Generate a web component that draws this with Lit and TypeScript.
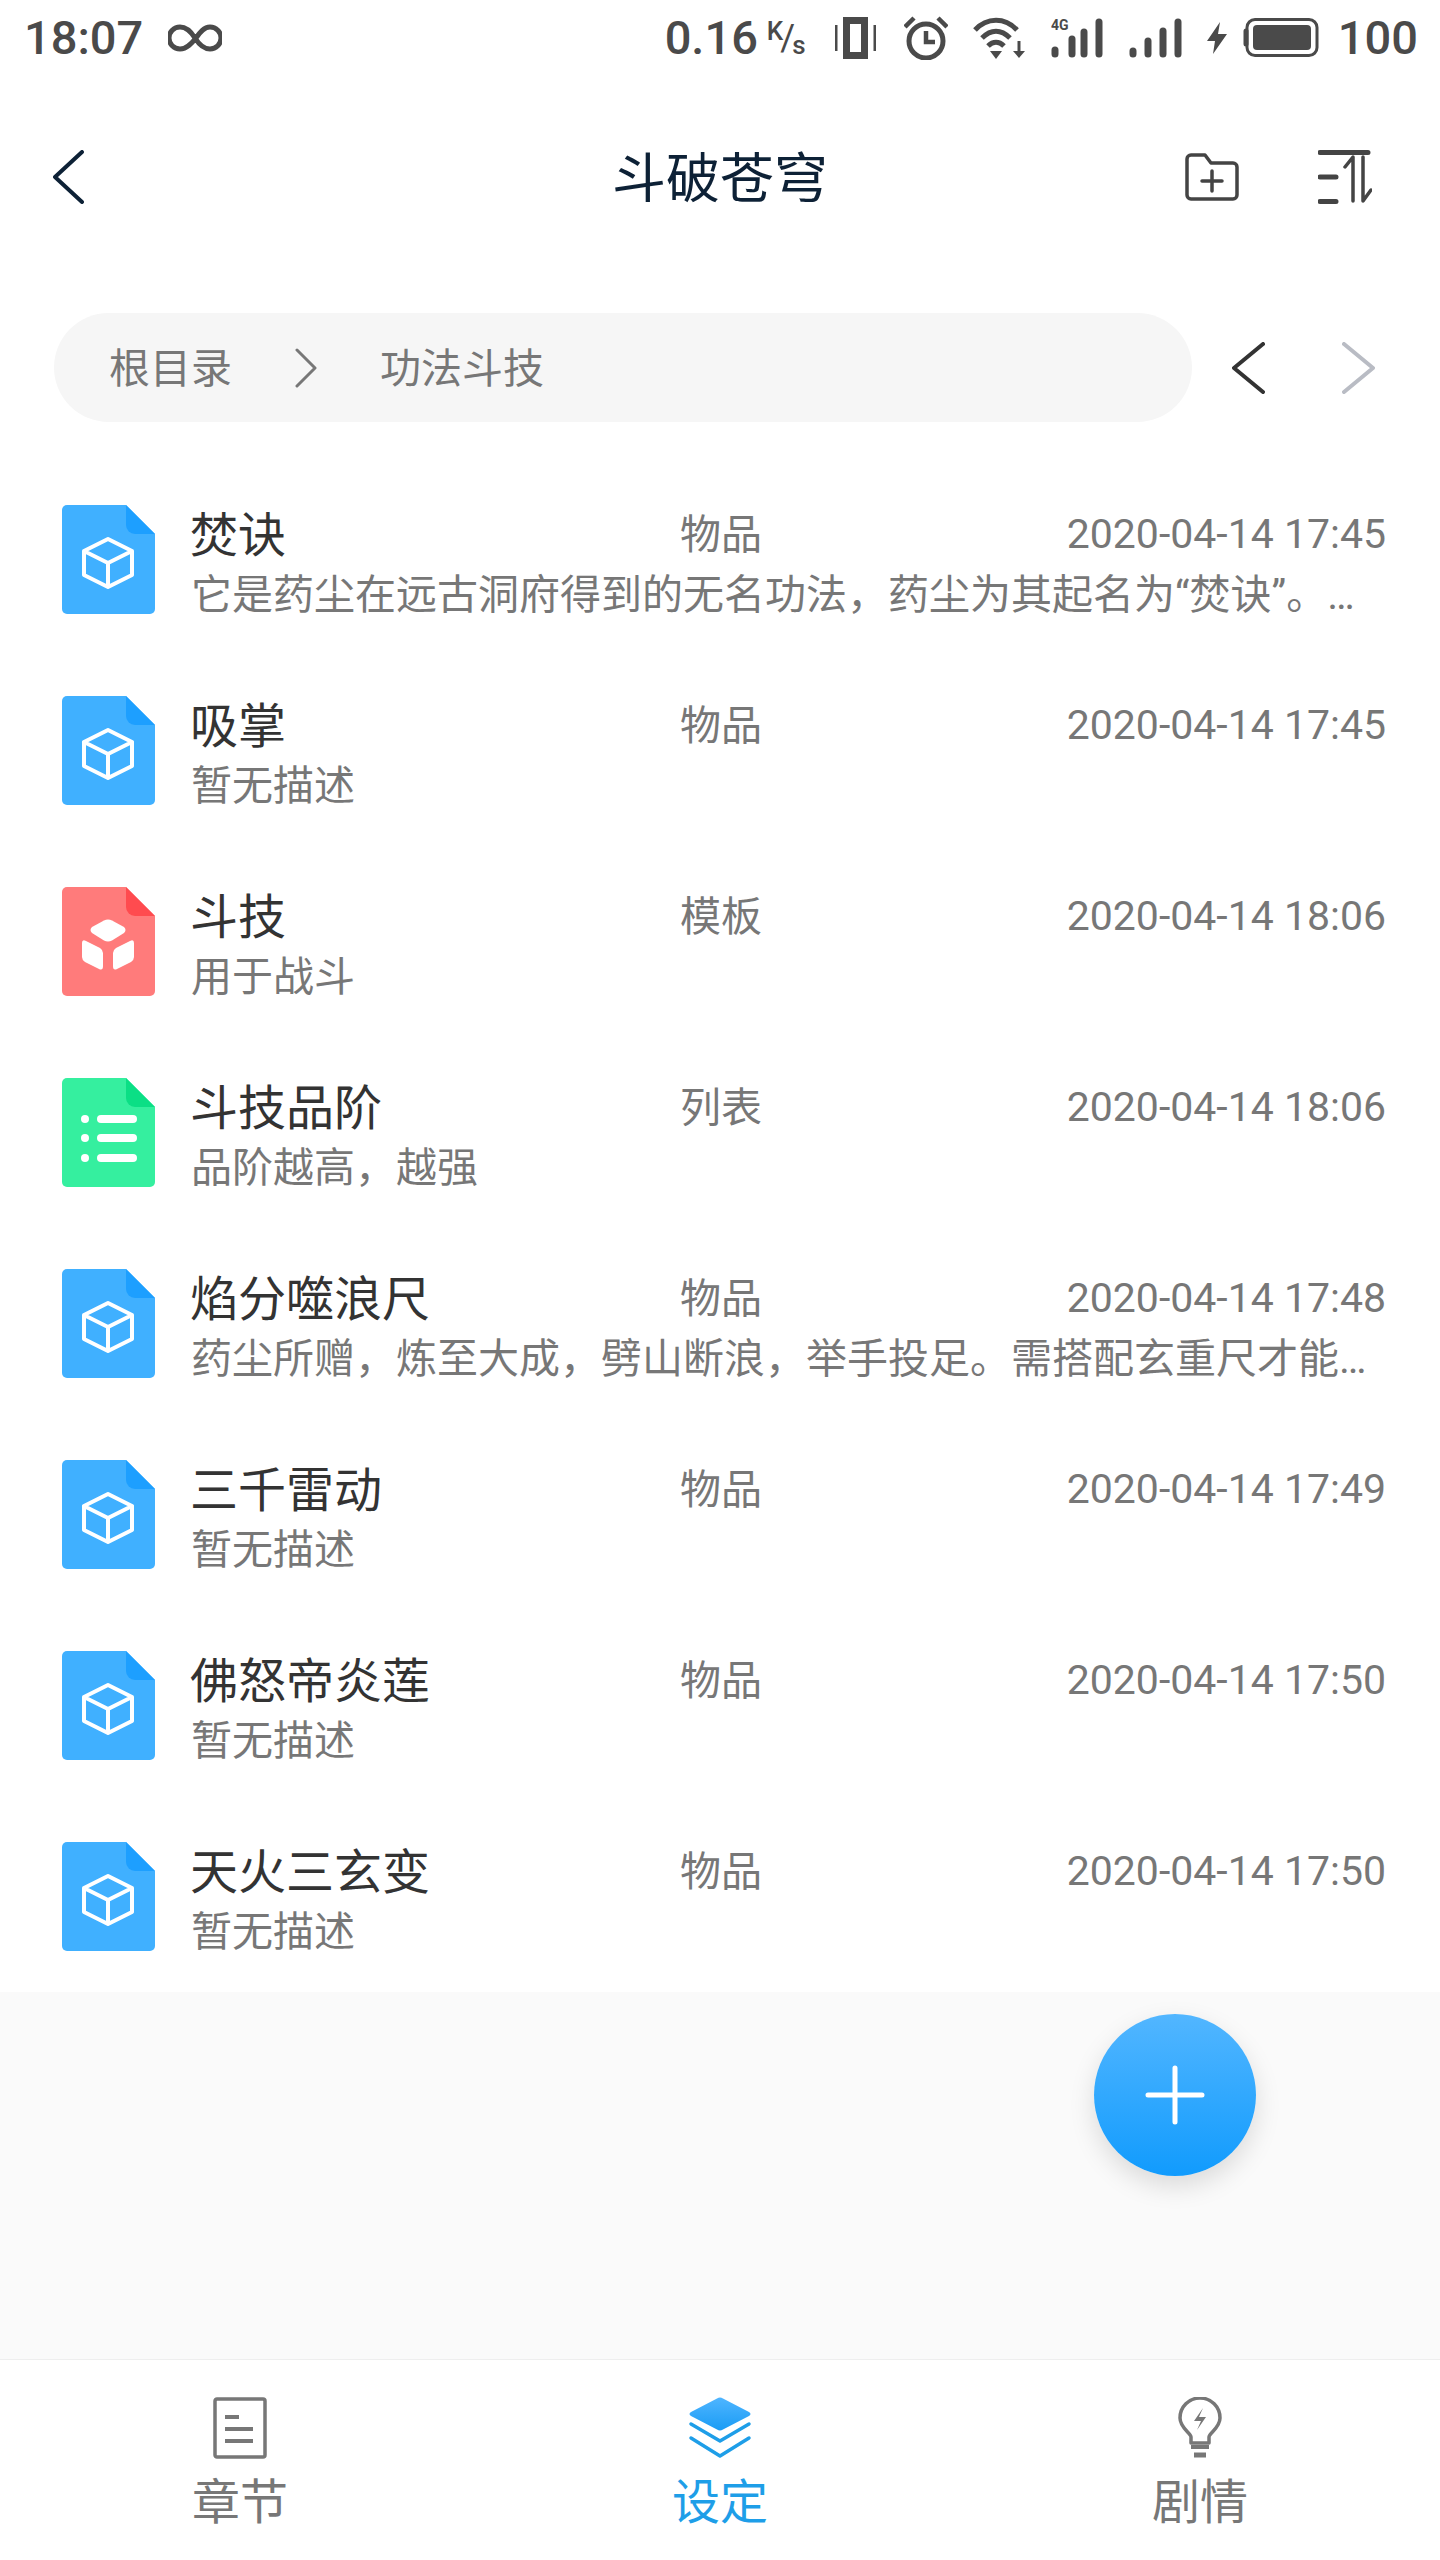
import { LitElement, html, css, svg } from "lit";
import { customElement } from "lit/decorators.js";

type Kind = "item" | "tpl" | "list";
const ROWS: { k: Kind; t: string; ty: string; d: string; s: string }[] = [
  { k: "item", t: "焚诀", ty: "物品", d: "2020-04-14 17:45", s: "它是药尘在远古洞府得到的无名功法，药尘为其起名为“焚诀”。…" },
  { k: "item", t: "吸掌", ty: "物品", d: "2020-04-14 17:45", s: "暂无描述" },
  { k: "tpl", t: "斗技", ty: "模板", d: "2020-04-14 18:06", s: "用于战斗" },
  { k: "list", t: "斗技品阶", ty: "列表", d: "2020-04-14 18:06", s: "品阶越高，越强" },
  { k: "item", t: "焰分噬浪尺", ty: "物品", d: "2020-04-14 17:48", s: "药尘所赠，炼至大成，劈山断浪，举手投足。需搭配玄重尺才能…" },
  { k: "item", t: "三千雷动", ty: "物品", d: "2020-04-14 17:49", s: "暂无描述" },
  { k: "item", t: "佛怒帝炎莲", ty: "物品", d: "2020-04-14 17:50", s: "暂无描述" },
  { k: "item", t: "天火三玄变", ty: "物品", d: "2020-04-14 17:50", s: "暂无描述" },
];
const COL: Record<Kind, [string, string]> = {
  item: ["#40b0ff", "#1d9fff"],
  tpl: ["#ff7b7b", "#ff4b4f"],
  list: ["#35ef9f", "#0bdf85"],
};

function fileIcon(k: Kind) {
  const [a, b] = COL[k];
  let inner;
  if (k === "item") {
    inner = svg`<path d="M46 34L70 46V70L46 82L22 70V46Z M22 46L46 58L70 46 M46 58V82" fill="none" stroke="#fff" stroke-width="4" stroke-linejoin="round" stroke-linecap="round"/>`;
  } else if (k === "tpl") {
    inner = svg`<path d="M42 33.500Q46 31.500 50 33.500L62 40Q65 43 62 46L50 53.500Q46 55.500 42 53.500L30 46Q27 43 30 40Z" fill="#fff"/>
      <path d="M20 56Q20 52 24 54L38 61Q41 63 41 66V79Q41 84 37 82L23 75Q20 73 20 70Z" fill="#fff"/>
      <path d="M72 56Q72 52 68 54L54 61Q51 63 51 66V79Q51 84 55 82L69 75Q72 73 72 70Z" fill="#fff"/>`;
  } else {
    inner = svg`<g fill="#fff"><circle cx="23" cy="41" r="4"/><circle cx="23" cy="60" r="4"/><circle cx="23" cy="80" r="4"/>
      <rect x="35" y="37" width="40" height="8" rx="4"/><rect x="35" y="56" width="40" height="8" rx="4"/><rect x="35" y="76" width="40" height="8" rx="4"/></g>`;
  }
  return html`<svg class="file" width="93" height="109" viewBox="0 0 93 109">
    <path d="M5 0H64L93 29V104a5 5 0 0 1-5 5H5a5 5 0 0 1-5-5V5a5 5 0 0 1 5-5Z" fill="${a}"/>
    <path d="M64 0L93 29H73a9 9 0 0 1-9-9Z" fill="${b}"/>
    ${inner}
  </svg>`;
}

@customElement("app-root")
export class AppRoot extends LitElement {
  static styles = css`
    :host { display: block; width: 1440px; height: 2560px; position: relative; background: #fff; overflow: hidden;
      font-family: "Noto Sans CJK SC", "Noto Sans", sans-serif; }
    .page { display: flex; flex-direction: column; height: 100%; }
    .status { height: 75px; display: flex; align-items: center; padding: 0 22px 0 24px; color: #4a4a4a;
      font-family: Roboto, sans-serif; font-weight: 500; font-size: 47px; line-height: 75px; flex: none; }
    .status svg { display: block; flex: none; }
    .status .grow { flex: 1; }
    .kbs { margin-left: 9px; width: 41px; height: 40px; position: relative; flex: none; display: flex; font-size: 26px; line-height: 26px; }
    .kbs .k { align-self: flex-start; }
    .kbs .sl { font-weight: 400; font-size: 36px; line-height: 40px; margin: 0 -3px; }
    .kbs .s { align-self: flex-end; }
    .header { height: 204px; display: grid; grid-template-columns: 1fr auto 1fr; align-items: center; padding: 0 53px; flex: none; }
    .header h1 { margin: 0; font-size: 54px; font-weight: 400; color: #0d2136; line-height: 70px; white-space: nowrap; position: relative; top: -2px; }
    .header svg { display: block; flex: none; }
    .header .right { display: flex; justify-content: flex-end; align-items: center; gap: 79px; margin-right: 15px; }
    .crumbs { display: flex; align-items: center; padding: 34px 65px 42px 54px; flex: none; }
    .pill { width: 1138px; height: 109px; border-radius: 55px; background: #f6f6f6; display: flex; align-items: center; color: #777; font-size: 41px; line-height: 100px; padding: 0 0 5px 55px; box-sizing: border-box; }
    .pill svg { margin: 5px 63px 0 63px; display: block; flex: none; }
    .crumbs .nav { display: flex; gap: 77px; margin-left: 40px; }
    .row { height: 191px; display: flex; align-items: center; padding: 0 54px 0 62px; box-sizing: border-box; }
    .file { display: block; flex: none; }
    .body { margin-left: 37px; flex: 1; min-width: 0; padding-top: 6px; }
    .top { display: grid; grid-template-columns: 488px 1fr auto; align-items: center; height: 60px; margin-bottom: 4px; }
    .name { font-size: 48px; color: #333; line-height: 60px; white-space: nowrap; margin-left: -2px; }
    .type { font-size: 41px; color: #777; line-height: 60px; }
    .date { font-family: Roboto, sans-serif; font-size: 41px; color: #777; line-height: 60px; position: relative; top: 3px; }
    .desc { font-family: Roboto, "Noto Sans CJK SC", sans-serif; font-size: 41px; color: #777; line-height: 60px; white-space: nowrap; margin-left: -1px; }
    .fill { flex: 1; background: #fafafa; }
    .fab { position: absolute; left: 1094px; top: 2014px; width: 162px; height: 162px; border-radius: 50%;
      background: linear-gradient(180deg, #52b6ff, #119bfd); box-shadow: 0 10px 26px rgba(0,0,0,.13); display: flex; align-items: center; justify-content: center; }
    .tabs { height: 201px; flex: none; background: #fff; display: grid; grid-template-columns: repeat(3, 480px); border-top: 1px solid #eee; box-sizing: border-box; }
    .tab { display: flex; flex-direction: column; align-items: center; padding-top: 37px; color: #777; font-size: 48px; line-height: 60px; }
    .tab.on { color: #1e9ee8; }
    .tab svg { display: block; margin-bottom: 9px; }
  `;

  render() {
    const c = "#4a4a4a";
    return html`<div class="page">
      <div class="status">
        <span>18:07</span>
        <svg style="margin-left:25px" width="54" height="30" viewBox="0 0 54 30"><path d="M27 15C22 7 17 4 12 4a11 11 0 0 0 0 22C19 26 24 20 28 15C32 9 36 4 42 4a11 11 0 0 1 0 22C37 26 32 23 27 15" fill="none" stroke="${c}" stroke-width="5"/></svg>
        <span class="grow"></span>
        <span>0.16</span>
        <span class="kbs"><span class="k">K</span><span class="sl">/</span><span class="s">s</span></span>
        <svg style="margin-left:27px" width="41" height="42" viewBox="0 0 41 42"><path d="M8 0H33V42H8Z M15 7V35H26V7Z" fill="${c}" fill-rule="evenodd"/><path d="M1 8V34 M40 8V34" stroke="${c}" stroke-width="3"/></svg>
        <svg style="margin-left:28px" width="44" height="44" viewBox="0 0 44 44"><circle cx="22" cy="25" r="17" fill="none" stroke="${c}" stroke-width="5"/><path d="M22 15V26H31" fill="none" stroke="${c}" stroke-width="4.500"/><path d="M1 11L10 2 M43 11L34 2" stroke="${c}" stroke-width="4.500"/></svg>
        <svg style="margin-left:25px" width="53" height="42" viewBox="0 0 53 42"><path d="M2 13C14 0 32 0 44 13 M9 21C18 12 28 12 37 21 M15 29C20 24 26 24 31 29" fill="none" stroke="${c}" stroke-width="5"/><path d="M17 34H29L23 42Z" fill="${c}"/><path d="M46 24V38" stroke="${c}" stroke-width="3"/><path d="M40 34H52L46 41Z" fill="${c}"/></svg>
        <svg style="margin-left:25px" width="52" height="40" viewBox="0 0 52 40"><text x="0" y="12" font-size="14" font-weight="700" font-family="Roboto" fill="${c}">4G</text><g stroke="${c}" stroke-width="7" stroke-linecap="round"><path d="M4 32V36 M21 21V36 M33 14V36 M48 4V36" /></g></svg>
        <svg style="margin-left:26px" width="53" height="40" viewBox="0 0 53 40"><g stroke="${c}" stroke-width="7" stroke-linecap="round"><path d="M4 33V36 M19 23V36 M34 13V36 M49 4V36"/></g></svg>
        <svg style="margin-left:24px" width="22" height="32" viewBox="0 0 22 32"><path d="M14 0L1 19H9L7 32L21 12H12Z" fill="${c}"/></svg>
        <svg style="margin-left:13px" width="78" height="39" viewBox="0 0 78 39"><path d="M5 13V26" stroke="${c}" stroke-width="5" stroke-linecap="round"/><rect x="6" y="1.500" width="70" height="36" rx="8" fill="none" stroke="${c}" stroke-width="3"/><rect x="12" y="7" width="58" height="25" rx="4" fill="${c}"/></svg>
        <span style="margin-left:19px">100</span>
      </div>

      <div class="header">
        <svg width="31" height="54" viewBox="0 0 31 54"><path d="M29 2L2 27L29 52" fill="none" stroke="#0d2136" stroke-width="4" stroke-linecap="round" stroke-linejoin="round"/></svg>
        <h1>斗破苍穹</h1>
        <div class="right">
          <svg width="54" height="48" viewBox="0 0 54 48"><path d="M6 2H20L26 10H48a4 4 0 0 1 4 4V42a4 4 0 0 1-4 4H6a4 4 0 0 1-4-4V6a4 4 0 0 1 4-4Z" fill="none" stroke="#444" stroke-width="3.500" stroke-linejoin="round"/><path d="M17 28H37 M27 18V38" stroke="#444" stroke-width="3.500" stroke-linecap="round"/></svg>
          <svg width="54" height="54" viewBox="0 0 54 54"><path d="M2 2.500H50 M2 27H18 M2 51.500H18" stroke="#444" stroke-width="5" stroke-linecap="round"/><path d="M35 51V7L27 17 M45 7V51L53 40" fill="none" stroke="#444" stroke-width="3.500" stroke-linecap="round" stroke-linejoin="round"/></svg>
        </div>
      </div>

      <div class="crumbs">
        <div class="pill">
          <span>根目录</span>
          <svg width="22" height="40" viewBox="0 0 22 40"><path d="M2 2L20 20L2 38" fill="none" stroke="#777" stroke-width="3" stroke-linecap="round" stroke-linejoin="round"/></svg>
          <span>功法斗技</span>
        </div>
        <div class="nav">
          <svg width="33" height="52" viewBox="0 0 33 52"><path d="M31 2L2 26L31 50" fill="none" stroke="#333" stroke-width="4" stroke-linecap="round" stroke-linejoin="round"/></svg>
          <svg width="33" height="52" viewBox="0 0 33 52"><path d="M2 2L31 26L2 50" fill="none" stroke="#b9bcc4" stroke-width="4" stroke-linecap="round" stroke-linejoin="round"/></svg>
        </div>
      </div>

      <div class="list">
        ${ROWS.map(
          (r) => html`<div class="row">
            ${fileIcon(r.k)}
            <div class="body">
              <div class="top"><span class="name">${r.t}</span><span class="type">${r.ty}</span><span class="date">${r.d}</span></div>
              <div class="desc">${r.s}</div>
            </div>
          </div>`
        )}
      </div>
      <div class="fill"></div>

      <div class="tabs">
        <div class="tab">
          <svg width="54" height="62" viewBox="0 0 54 62"><rect x="2" y="2" width="50" height="58" rx="2" fill="none" stroke="#777" stroke-width="3.500"/><path d="M12 20H26 M12 32H40 M12 44H40" stroke="#777" stroke-width="4"/></svg>
          <span>章节</span>
        </div>
        <div class="tab on">
          <svg width="64" height="62" viewBox="0 0 64 62">
            <defs><linearGradient id="lg" x1="0" y1="0" x2="0" y2="1"><stop offset="0" stop-color="#4fb5ff"/><stop offset="1" stop-color="#1a9cf5"/></linearGradient></defs>
            <path d="M29 1.500Q32 -.5 35 1.500L61 15Q64 17 61 19L35 32.500Q32 34.500 29 32.500L3 19Q0 17 3 15Z" fill="url(#lg)"/>
            <path d="M3 27L32 44L61 27 M3 41L32 59L61 41" fill="none" stroke="#1e9ee8" stroke-width="3.500" stroke-linecap="round" stroke-linejoin="round"/>
          </svg>
          <span>设定</span>
        </div>
        <div class="tab">
          <svg width="44" height="62" viewBox="0 0 44 62"><path d="M13 46V40C13 36 2 31 2 21a20 20 0 0 1 40 0C42 31 31 36 31 40V46Z" fill="none" stroke="#777" stroke-width="3.500" stroke-linejoin="round"/><path d="M25 11L16 24H23L19 33L28 20H21Z" fill="#777"/><path d="M13 50H31" stroke="#777" stroke-width="4"/><path d="M16 58H28" stroke="#777" stroke-width="5"/></svg>
          <span>剧情</span>
        </div>
      </div>

      <div class="fab">
        <svg width="60" height="60" viewBox="0 0 60 60"><path d="M3 30H57 M30 3V57" stroke="#fff" stroke-width="5" stroke-linecap="round"/></svg>
      </div>
    </div>`;
  }
}
